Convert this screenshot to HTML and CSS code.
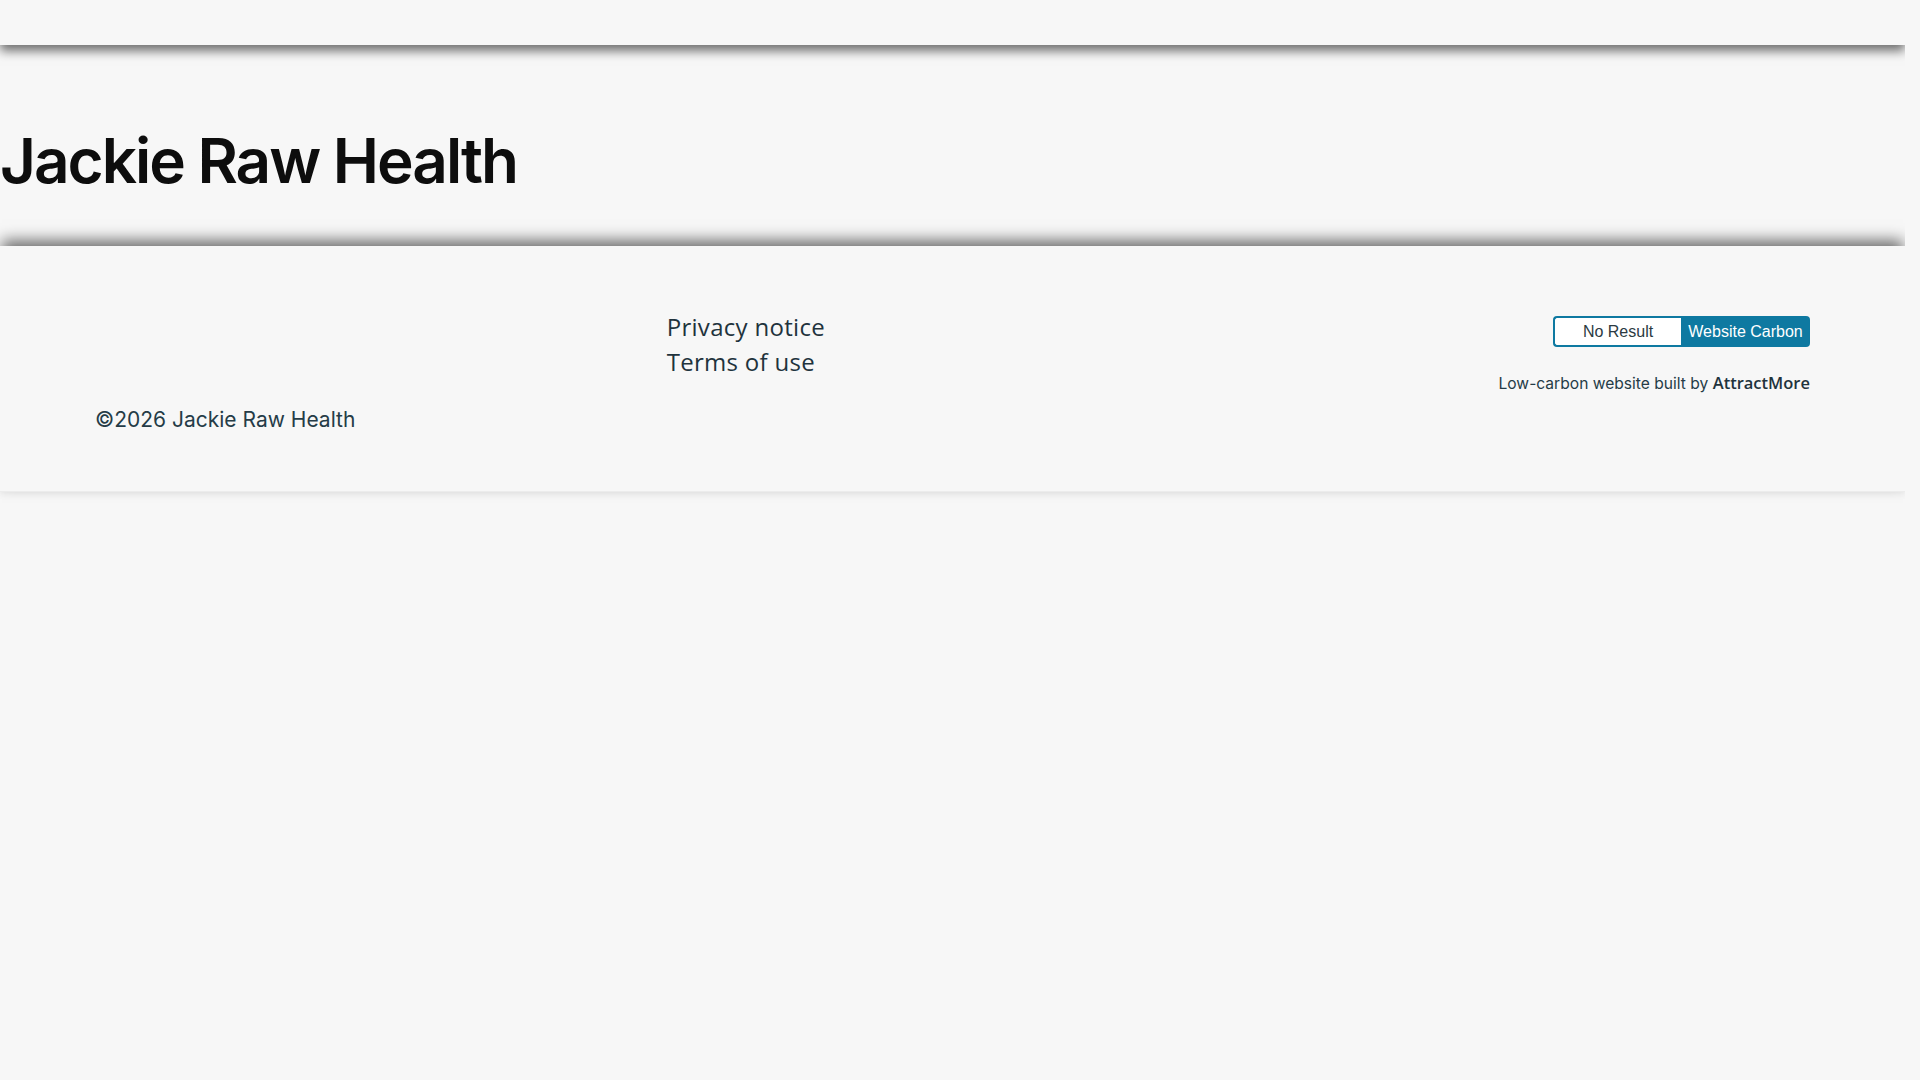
FILE: index.html
```html
<!DOCTYPE html>
<html lang="en">
<head>
<meta charset="utf-8">
<title>Jackie Raw Health</title>
<link rel="stylesheet" href="styles.css">
</head>
<body>
<div class="page">
  <header class="topbar"></header>
  <section class="hero">
    <h1 class="site-title">Jackie Raw Health</h1>
  </section>
  <footer class="footer">
    <div class="footer-inner">
      <div class="col col-left">
        <p class="copyright">©2026 Jackie Raw Health</p>
      </div>
      <nav class="col col-mid">
        <a class="foot-link" href="#">Privacy notice</a>
        <a class="foot-link" href="#">Terms of use</a>
      </nav>
      <div class="col col-right">
        <div class="wcb">
          <span class="wcb-result">No Result</span>
          <span class="wcb-label">Website Carbon</span>
        </div>
        <p class="credit">Low-carbon website built by <a class="credit-link" href="#">AttractMore</a></p>
      </div>
    </div>
  </footer>
</div>
</body>
</html>
```

FILE: styles.css
```css
* { box-sizing: border-box; }
html, body { margin: 0; padding: 0; background: #f7f7f7; }
body { font-family: Inter, "Liberation Sans", sans-serif; color: #253c47; }

.page {
  width: 1905px;
  overflow: hidden;
  padding-bottom: 20px;
}

.topbar {
  height: 45px;
  background: #f7f7f7;
  box-shadow: 0 6px 10px rgba(0, 0, 0, 0.55);
  position: relative;
  z-index: 2;
}

.hero {
  height: 201px;
  padding-top: 76px;
}

.site-title {
  margin: 0;
  font-family: Inter, sans-serif;
  font-weight: 600;
  font-size: 62px;
  line-height: 80px;
  color: #0d0d0d;
  letter-spacing: -2px;
}

.footer {
  background: #f7f7f7;
  box-shadow: 0 -8px 14px -2px rgba(0, 0, 0, 0.55), 0 4px 6px rgba(0, 0, 0, 0.04);
  position: relative;
  border-bottom: 1px solid #ececec;
}

.footer-inner {
  display: grid;
  grid-template-columns: 1fr 1fr 1fr;
  padding: 63px 95px 56px;
}

.col-left {
  padding-top: 96px;
}

.copyright {
  margin: 0;
  font-size: 21px;
  line-height: 30px;
  color: #253c47;
}

.col-mid {
  display: flex;
  flex-direction: column;
  align-items: flex-start;
}

.foot-link {
  font-family: "Open Sans", sans-serif;
  font-size: 24px;
  line-height: 35px;
  letter-spacing: 0.3px;
  color: #1f333d;
  text-decoration: none;
}

.col-right {
  display: flex;
  flex-direction: column;
  align-items: flex-end;
}

.wcb {
  display: flex;
  height: 31px;
  margin-top: 7px;
  font-family: "Liberation Sans", Arial, sans-serif;
  font-size: 16px;
}

.wcb-result {
  width: 128px;
  display: flex;
  align-items: center;
  justify-content: center;
  background: #fff;
  color: #2b3a42;
  border: 2px solid #0e79a1;
  border-right: none;
  border-radius: 4px 0 0 4px;
}

.wcb-label {
  width: 129px;
  display: flex;
  align-items: center;
  justify-content: center;
  background: #0e79a1;
  color: #fff;
  border-radius: 0 4px 4px 0;
}

.credit {
  margin: 25px 0 0;
  font-size: 15.6px;
  line-height: 22px;
  color: #253c47;
}

.credit-link {
  font-family: "Open Sans", sans-serif;
  font-weight: 600;
  font-size: 16.5px;
  color: #1f333d;
  text-decoration: none;
}
```
